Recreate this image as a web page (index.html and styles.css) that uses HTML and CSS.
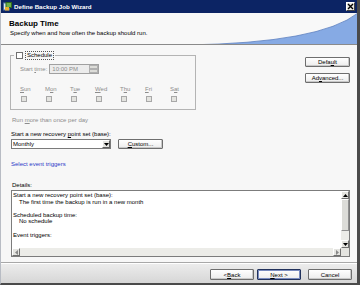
FILE: index.html
```html
<!DOCTYPE html>
<html>
<head>
<meta charset="utf-8">
<link rel="stylesheet" href="styles.css">
</head>
<body>
<div class="window">
  <div class="titlebar">
    <svg class="app-icon" width="9" height="9" viewBox="0 0 9 9">
      <rect x="0.5" y="1" width="6" height="7" fill="#d8e4f4" stroke="#4a6aa0" stroke-width="1"/>
      <rect x="3" y="0.5" width="5.5" height="5" fill="#6fb04a" stroke="#2f6a20" stroke-width="1"/>
      <rect x="2" y="5" width="4" height="3.5" fill="#e8b030"/>
    </svg>
    <span class="title-text">Define Backup Job Wizard</span>
    <span class="close-btn">
      <svg width="7" height="7" viewBox="0 0 7 7"><path d="M1 1 L6 6 M6 1 L1 6" stroke="#000" stroke-width="1.4"/></svg>
    </span>
  </div>
  <div class="header">
    <svg class="header-art" width="360" height="32" viewBox="0 0 360 32" preserveAspectRatio="none">
      <path d="M186 32 Q 320 30 358 0 L360 0 L360 32 Z" fill="#86aae4"/>
      <path d="M186 32 Q 320 30 358 0" fill="none" stroke="#5c7fbf" stroke-width="0.8"/>
    </svg>
    <div class="header-title">Backup Time</div>
    <div class="header-sub">Specify when and how often the backup should run.</div>
  </div>
  <div class="content">
    <div class="main-col">
      <fieldset class="group">
        <legend class="group-legend">
          <span class="check"></span><span class="focus-label">Schedule</span>
        </legend>
        <div class="time-row">
          <span class="disabled">Start <u>t</u>ime:</span>
          <span class="time-box">
            <span class="time-val">10:00 PM</span>
            <span class="spin"><span class="spin-up"></span><span class="spin-down"></span></span>
          </span>
        </div>
        <div class="days">
          <div class="day"><span class="disabled"><u>S</u>un</span><span class="check small"></span></div>
          <div class="day"><span class="disabled">M<u>o</u>n</span><span class="check small"></span></div>
          <div class="day"><span class="disabled">T<u>u</u>e</span><span class="check small"></span></div>
          <div class="day"><span class="disabled"><u>W</u>ed</span><span class="check small"></span></div>
          <div class="day"><span class="disabled">T<u>h</u>u</span><span class="check small"></span></div>
          <div class="day"><span class="disabled"><u>F</u>ri</span><span class="check small"></span></div>
          <div class="day"><span class="disabled">S<u>a</u>t</span><span class="check small"></span></div>
        </div>
      </fieldset>
      <div class="run-more disabled">Run <u>m</u>ore than once per day</div>
      <div class="label-base">Start a new recovery <u>p</u>oint set (base):</div>
      <div class="combo-row">
        <span class="combo">
          <span class="combo-val">Monthly</span>
          <span class="combo-btn"><svg width="5" height="3" viewBox="0 0 5 3"><path d="M0 0 L5 0 L2.5 3 Z" fill="#000"/></svg></span>
        </span>
        <span class="btn custom-btn"><u>C</u>ustom...</span>
      </div>
      <div class="link">Select event triggers</div>
    </div>
    <div class="side-col">
      <span class="btn side-btn">Defa<u>u</u>lt</span>
      <span class="btn side-btn">Ad<u>v</u>anced...</span>
    </div>
    <div class="details">
      <div class="details-label">Details:</div>
      <div class="details-box">
        <div class="details-text">
          <div>Start a new recovery point set (base):</div>
          <div class="indent">The first time the backup is run in a new month</div>
          <div class="blank"></div>
          <div>Scheduled backup time:</div>
          <div class="indent">No schedule</div>
          <div class="blank"></div>
          <div>Event triggers:</div>
        </div>
        <div class="vscroll">
          <span class="sb-btn"><svg width="5" height="3" viewBox="0 0 5 3"><path d="M0 3 L5 3 L2.5 0 Z" fill="#000"/></svg></span>
          <span class="sb-thumb"></span>
          <span class="sb-track"></span>
          <span class="sb-btn"><svg width="5" height="3" viewBox="0 0 5 3"><path d="M0 0 L5 0 L2.5 3 Z" fill="#000"/></svg></span>
        </div>
        <div class="hscroll">
          <span class="sb-btn h"><svg width="3" height="5" viewBox="0 0 3 5"><path d="M3 0 L3 5 L0 2.5 Z" fill="#888"/></svg></span>
          <span class="h-track"></span>
          <span class="sb-btn h"><svg width="3" height="5" viewBox="0 0 3 5"><path d="M0 0 L0 5 L3 2.5 Z" fill="#888"/></svg></span>
        </div>
        <div class="corner"></div>
      </div>
    </div>
  </div>
  <div class="footer">
    <span class="btn nav-btn">&lt; <u>B</u>ack</span>
    <span class="btn nav-btn default-btn"><u>N</u>ext &gt;</span>
    <span class="btn nav-btn cancel-btn">Cancel</span>
  </div>
</div>
</body>
</html>
```

FILE: styles.css
```css
* { box-sizing: border-box; }
html, body { margin: 0; padding: 0; }
body {
  width: 360px;
  height: 285px;
  overflow: hidden;
  font-family: "Liberation Sans", Arial, sans-serif;
  font-size: 6px;
  color: #000;
}
u { text-decoration: underline; text-underline-offset: 1px; }
.window {
  width: 360px;
  height: 285px;
  display: flex;
  flex-direction: column;
  background: #f6f6f6;
  border-left: 1px solid #b8bcc4;
  border-right: 3px solid #4a4a4a;
  border-bottom: 2px solid #4a4a4a;
}
.titlebar {
  height: 13px;
  background: #0c2464;
  display: flex;
  align-items: center;
  padding: 0 2px 0 2px;
  flex-shrink: 0;
}
.app-icon { margin-right: 2px; }
.title-text {
  color: #fff;
  font-weight: bold;
  font-size: 6.2px;
  flex: 1;
}
.close-btn {
  width: 9px;
  height: 9px;
  background: #e8e8e4;
  border: 1px solid #fff;
  border-right-color: #404040;
  border-bottom-color: #404040;
  display: flex;
  align-items: center;
  justify-content: center;
}
.header {
  position: relative;
  height: 32px;
  flex-shrink: 0;
  background: #f8f8f8;
  border-bottom: 1px solid #8a8a8a;
  padding: 6px 0 0 8px;
  overflow: hidden;
}
.header-art { position: absolute; left: -1px; top: 0; }
.header-title {
  position: relative;
  font-weight: bold;
  font-size: 8px;
  line-height: 9px;
}
.header-sub {
  position: relative;
  font-size: 6px;
  line-height: 8px;
  margin-top: 1px;
  padding-left: 1px;
}
.content {
  flex: 1;
  display: grid;
  grid-template-columns: 1fr 46px;
  grid-template-rows: auto 1fr;
  padding: 6px 6px 0 9px;
  border-bottom: 1px solid #a8a8a8;
  background: #f7f7f7;
}
.main-col { grid-column: 1; grid-row: 1; }
.side-col {
  grid-column: 2;
  grid-row: 1;
  display: flex;
  flex-direction: column;
  gap: 6px;
  padding-top: 6px;
}
.details { grid-column: 1 / span 2; grid-row: 2; padding-right: 1px; }
.group {
  margin: 0;
  width: 179px;
  height: 59px;
  border: 1px solid #b4b4b4;
  padding: 0 0 0 9px;
}
.group-legend {
  padding: 0 1px 0 2px;
  display: flex;
  align-items: center;
  margin-left: -6px;
  height: 9px;
}
.check {
  display: inline-block;
  width: 7px;
  height: 7px;
  border: 1px solid #707070;
  background: #fff;
  margin-right: 2px;
}
.check.small {
  width: 6px;
  height: 6px;
  border-color: #a8a8a8;
  background: #e4e4e0;
  margin: 3px 0 0 1px;
}
.focus-label {
  border: 1px dotted #555;
  padding: 0 1px;
  line-height: 7px;
}
.disabled { color: #8c8c8c; }
.time-row {
  display: flex;
  align-items: center;
  margin-top: 4px;
  height: 10px;
}
.time-box {
  margin-left: 2px;
  width: 50px;
  height: 10px;
  border: 1px solid #a0a0a0;
  background: #ececec;
  display: flex;
  align-items: center;
}
.time-val { flex: 1; color: #8c8c8c; padding-left: 2px; }
.spin {
  width: 9px;
  height: 8px;
  display: flex;
  flex-direction: column;
}
.spin-up, .spin-down {
  flex: 1;
  background: #dcdcd8;
  border: 1px solid #b0b0b0;
}
.days {
  display: grid;
  grid-template-columns: repeat(7, 25px);
  margin-top: 12px;
  margin-left: 0;
}
.day { display: flex; flex-direction: column; align-items: flex-start; line-height: 7px; }
.run-more { margin-top: 6px; margin-left: 2px; line-height: 8px; }
.label-base { margin-top: 6px; margin-left: 1px; line-height: 8px; }
.combo-row { display: flex; align-items: center; margin-top: 1px; }
.combo {
  width: 100px;
  height: 10px;
  margin-left: 1px;
  border: 1px solid #7a7a7a;
  background: #fff;
  display: flex;
  align-items: center;
}
.combo-val { flex: 1; padding-left: 1px; }
.combo-btn {
  width: 8px;
  height: 8px;
  background: #e4e4e0;
  border: 1px solid #fff;
  border-right-color: #606060;
  border-bottom-color: #606060;
  display: flex;
  align-items: center;
  justify-content: center;
}
.btn {
  display: flex;
  align-items: center;
  justify-content: center;
  border: 1px solid #6e6e6e;
  border-radius: 1px;
  background: linear-gradient(#ffffff, #ececec);
  box-shadow: inset -1px -1px 0 #c8c8c8;
  font-size: 6px;
}
.custom-btn { width: 45px; height: 10px; margin-left: 7px; }
.side-btn { width: 45px; height: 10px; }
.link { color: #2a3ac8; margin-top: 11px; margin-left: 1px; line-height: 8px; }
.details-label { margin-top: 14px; margin-left: 2px; line-height: 7px; }
.details-box {
  margin-top: 1px;
  margin-left: 1px;
  height: 67px;
  border: 1px solid #7c7c7c;
  background: #fff;
  display: grid;
  grid-template-columns: 1fr 8px;
  grid-template-rows: 1fr 8px;
  overflow: hidden;
}
.details-text { grid-column: 1; grid-row: 1; line-height: 6.6px; padding-left: 1px; padding-top: 1px; }
.indent { padding-left: 6px; }
.blank { height: 6.6px; }
.vscroll {
  grid-column: 2;
  grid-row: 1;
  display: flex;
  flex-direction: column;
  background: #ecece8;
}
.sb-btn {
  width: 8px;
  height: 8px;
  background: #e4e4e0;
  border: 1px solid #fff;
  border-right-color: #707070;
  border-bottom-color: #707070;
  display: flex;
  align-items: center;
  justify-content: center;
  flex-shrink: 0;
}
.sb-thumb {
  height: 32px;
  background: #dcdcd8;
  border: 1px solid #fff;
  border-right-color: #909090;
  border-bottom-color: #909090;
}
.sb-track { flex: 1; }
.hscroll {
  grid-column: 1;
  grid-row: 2;
  display: flex;
  background: #ecece8;
}
.h-track { flex: 1; }
.corner { grid-column: 2; grid-row: 2; background: #e4e4e0; }
.footer {
  height: 20px;
  flex-shrink: 0;
  display: flex;
  align-items: center;
  justify-content: flex-end;
  padding: 2px 5px 0 0;
  background: linear-gradient(#ececec, #d6d6d6);
  border-top: 1px solid #ffffff;
}
.nav-btn { width: 44px; height: 11px; }
.default-btn { margin-left: 3px; border-color: #22325c; box-shadow: inset 0 0 0 1px #7a8cc0; }
.cancel-btn { margin-left: 7px; }
```
